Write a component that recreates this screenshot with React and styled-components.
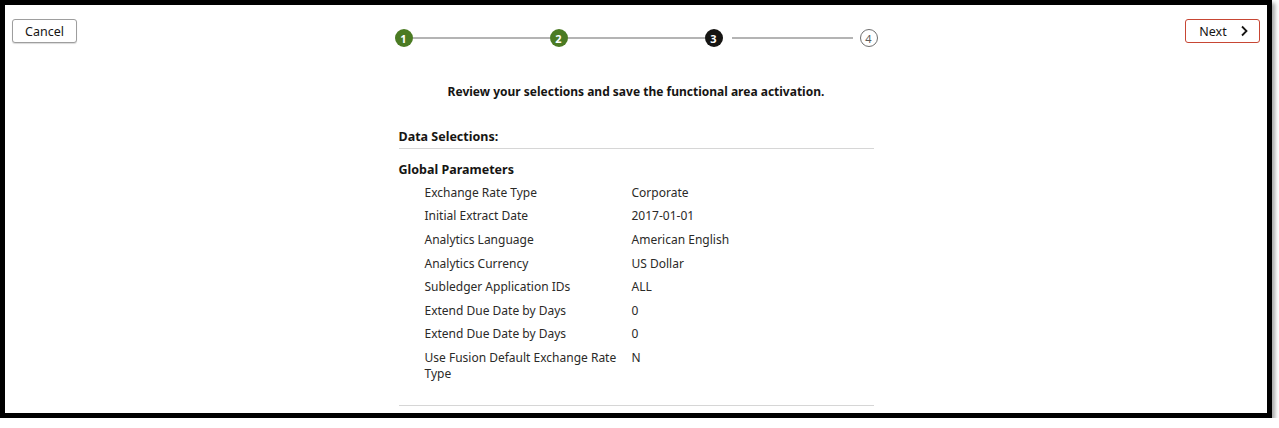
import React from "react";
import styled, { createGlobalStyle } from "styled-components";

const GlobalStyle = createGlobalStyle`
  body {
    margin: 0;
    background: #ffffff;
    font-family: "Noto Sans", "Open Sans", sans-serif;
    color: #161513;
  }
`;

const steps = [
  { n: 1, state: "done" },
  { n: 2, state: "done" },
  { n: 3, state: "current" },
  { n: 4, state: "todo" },
];

const params = [
  ["Exchange Rate Type", "Corporate"],
  ["Initial Extract Date", "2017-01-01"],
  ["Analytics Language", "American English"],
  ["Analytics Currency", "US Dollar"],
  ["Subledger Application IDs", "ALL"],
  ["Extend Due Date by Days", "0"],
  ["Extend Due Date by Days", "0"],
  ["Use Fusion Default Exchange Rate Type", "N"],
];

const App = () => {
  return (
    <>
      <GlobalStyle />
      <Frame>
        <Header>
          <LeftSlot>
            <Button>Cancel</Button>
          </LeftSlot>
          <Stepper>
            {steps.map((s, i) => (
              <React.Fragment key={s.n}>
                {i > 0 && (
                  <Connector
                    $gapLeft={steps[i - 1].state === "current" ? 9 : 0}
                    $gapRight={s.state === "todo" ? 7 : 0}
                  />
                )}
                <Step $state={s.state}>{s.n}</Step>
              </React.Fragment>
            ))}
          </Stepper>
          <RightSlot>
            <Button $primary>
              Next
              <svg width="10" height="12" viewBox="0 0 10 12">
                <path
                  d="M3 1.5 L7.5 6 L3 10.5"
                  fill="none"
                  stroke="#161513"
                  strokeWidth="1.8"
                />
              </svg>
            </Button>
          </RightSlot>
        </Header>

        <Intro>Review your selections and save the functional area activation.</Intro>

        <Content>
          <SectionTitle>Data Selections:</SectionTitle>
          <GroupTitle>Global Parameters</GroupTitle>
          <ParamList>
            {params.map(([label, value], i) => (
              <ParamRow key={i}>
                <Label>{label}</Label>
                <Value>{value}</Value>
              </ParamRow>
            ))}
          </ParamList>
        </Content>
      </Frame>
    </>
  );
};

const Frame = styled.div`
  box-sizing: border-box;
  width: 1272px;
  height: 418px;
  border: 5px solid #000;
  box-shadow: 3px 3px 4px rgba(0, 0, 0, 0.35);
  padding: 14px 7px 0 7px;
  overflow: hidden;
`;

const Header = styled.div`
  display: grid;
  grid-template-columns: 1fr auto 1fr;
  align-items: start;
`;

const LeftSlot = styled.div`
  display: flex;
`;

const RightSlot = styled.div`
  display: flex;
  justify-content: flex-end;
`;

const Button = styled.button`
  box-sizing: border-box;
  height: 24px;
  display: inline-flex;
  align-items: center;
  justify-content: center;
  gap: 12px;
  padding-left: ${(p) => (p.$primary ? "13px" : "12px")};
  padding-right: ${(p) => (p.$primary ? "10px" : "12px")};
  min-width: ${(p) => (p.$primary ? "75px" : "63px")};
  background: #fff;
  border: 1px solid ${(p) => (p.$primary ? "#c74634" : "#9e9e9e")};
  border-radius: 3px;
  box-shadow: ${(p) => (p.$primary ? "none" : "0 1px 1px rgba(0,0,0,0.15)")};
  font-family: "Noto Sans", "Open Sans", sans-serif;
  font-size: 12.5px;
  color: #161513;
`;

const Stepper = styled.div`
  display: flex;
  align-items: center;
  margin-top: 10px;
`;

const Connector = styled.div`
  box-sizing: border-box;
  width: 137px;
  height: 2px;
  padding-left: ${(p) => p.$gapLeft}px;
  padding-right: ${(p) => p.$gapRight}px;
  background: #b4b4b4;
  background-clip: content-box;
`;

const Step = styled.div`
  box-sizing: border-box;
  flex-shrink: 0;
  width: 18px;
  height: 18px;
  border-radius: 50%;
  display: flex;
  align-items: center;
  justify-content: center;
  font-size: 11px;
  font-weight: ${(p) => (p.$state === "todo" ? 400 : 700)};
  background: ${(p) =>
    p.$state === "done" ? "#4b7b23" : p.$state === "current" ? "#161513" : "#fff"};
  color: ${(p) => (p.$state === "todo" ? "#5c5c5c" : "#fff")};
  border: ${(p) => (p.$state === "todo" ? "1.5px solid #6f6f6f" : "none")};
`;

const Intro = styled.div`
  text-align: center;
  font-size: 12px;
  font-weight: 700;
  margin-top: 37px;
  line-height: 16px;
`;

const Content = styled.div`
  width: 475px;
  margin: 29px auto 0;
  border-bottom: 1px solid #d6d6d6;
  padding-bottom: 19px;
`;

const SectionTitle = styled.div`
  font-size: 12.5px;
  font-weight: 700;
  line-height: 16px;
  padding-bottom: 3px;
  border-bottom: 1px solid #d6d6d6;
`;

const GroupTitle = styled.div`
  font-size: 12.5px;
  font-weight: 700;
  line-height: 16px;
  margin-top: 13px;
`;

const ParamList = styled.div`
  margin-top: 3px;
  padding-left: 26px;
`;

const ParamRow = styled.div`
  display: grid;
  grid-template-columns: 207px 1fr;
  padding: 3.8px 0;
  line-height: 16px;
  font-size: 12px;
`;

const Label = styled.div`
  padding-right: 10px;
  color: #2b2a28;
`;

const Value = styled.div`
  color: #2b2a28;
`;

export default App;
